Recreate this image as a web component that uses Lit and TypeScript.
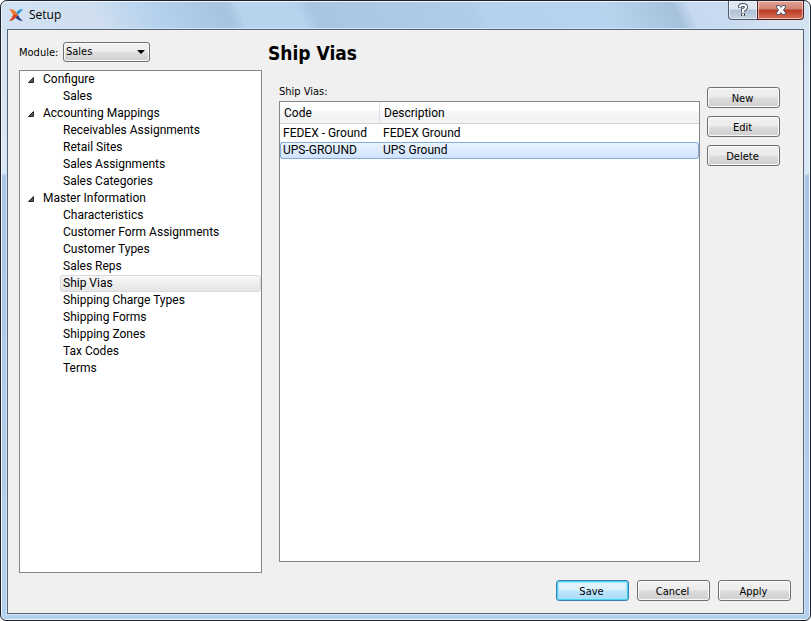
import { LitElement, html, css, svg } from "lit";
import { customElement, state } from "lit/decorators.js";
import { classMap } from "lit/directives/class-map.js";

interface Group {
  name: string;
  items: string[];
}

const GROUPS: Group[] = [
  { name: "Configure", items: ["Sales"] },
  {
    name: "Accounting Mappings",
    items: ["Receivables Assignments", "Retail Sites", "Sales Assignments", "Sales Categories"],
  },
  {
    name: "Master Information",
    items: [
      "Characteristics",
      "Customer Form Assignments",
      "Customer Types",
      "Sales Reps",
      "Ship Vias",
      "Shipping Charge Types",
      "Shipping Forms",
      "Shipping Zones",
      "Tax Codes",
      "Terms",
    ],
  },
];

const VIAS = [
  { code: "FEDEX - Ground", description: "FEDEX Ground" },
  { code: "UPS-GROUND", description: "UPS Ground" },
];

const expander = svg`<path d="M6.5 1.5V6.5H1.5Z" fill="#595959" stroke="#262626" stroke-width="1"/>`;

@customElement("app-root")
export class AppRoot extends LitElement {
  @state() private page = "Ship Vias";
  @state() private row = 1;

  static styles = css`
    :host {
      display: block;
      height: 100vh;
      font: 12px/17px Roboto, "Open Sans", sans-serif;
      color: #000;
      background: #fff;
    }
    * {
      box-sizing: border-box;
    }
    button,
    select {
      font: inherit;
      color: inherit;
      margin: 0;
      padding: 0;
    }
    .window {
      height: 100%;
      display: flex;
      flex-direction: column;
      padding: 0 6px 6px;
      border: 1px solid #1c212c;
      border-radius: 7px 7px 6px 6px;
      box-shadow: inset 0 0 0 1px #eef6fd;
      background:
        linear-gradient(65deg, #d3e2f2 0, #d0dff0 12%, #bad4ee 18%, #b0cdea 22%, #a8c3df 28%, #abc7e2 29%, #b8d3ee 30%, #b8d3ee 37%, #a9c5e1 39%, #adc8e4 47%, #b0cce8 58%, #b6d1ed 60%, #b8d3ee 75%, #a5c1dc 83%, #c6d9f0 85%, #cbdcf0 91%, #d3e3f2 94%) top / 100% 28px no-repeat,
        linear-gradient(#d3e2f2 0, #dae7f6 172px, #a8c5e4 175px, #b3d0ec 100%);
    }
    .titlebar {
      flex: none;
      height: 28px;
      display: flex;
      align-items: flex-start;
      justify-content: space-between;
      padding-left: 2px;
    }
    .caption {
      display: flex;
      align-items: center;
      gap: 6px;
      height: 27px;
      font: 12px/17px "Open Sans", "Noto Sans", sans-serif;
    }
    .logo {
      width: 14px;
      height: 12px;
      display: block;
    }
    .controls {
      display: flex;
      height: 19px;
    }
    .control {
      display: flex;
      align-items: center;
      justify-content: center;
      border: 1px solid #505c6e;
      border-top: 0;
      box-shadow: inset 0 0 0 1px #ffffff80;
    }
    .help {
      width: 29px;
      border-right: 0;
      border-radius: 0 0 0 4px;
      background: linear-gradient(#dce7f2 0 45%, #adbfd2 50%, #c5d5e5);
    }
    .close {
      width: 47px;
      border-color: #5b1f22;
      border-radius: 0 0 4px 0;
      background: linear-gradient(#e2a397 0, #d08274 45%, #b93822 50%, #d6735a);
    }
    .client {
      flex: 1;
      min-height: 0;
      display: flex;
      flex-direction: column;
      border: 1px solid #566273;
      background: #f0f0f0;
      padding: 12px 12px 12px 11px;
      gap: 7px;
      box-shadow: 0 0 0 1px #d5e6f6;
    }
    .panes {
      flex: 1;
      min-height: 0;
      display: flex;
      gap: 6px;
    }
    .side {
      flex: none;
      width: 243px;
      display: flex;
      flex-direction: column;
      gap: 8px;
    }
    .module {
      display: flex;
      align-items: center;
      justify-content: space-between;
      width: 131px;
      height: 20px;
    }
    .small {
      font: 11px/16px "DejaVu Sans Condensed", "DejaVu Sans", sans-serif;
    }
    .module label {
      padding-top: 2px;
    }
    .picker {
      position: relative;
      width: 87px;
      height: 20px;
    }
    .picker select {
      appearance: none;
      width: 100%;
      height: 100%;
      padding: 0 20px 0 2px;
      border: 1px solid #707070;
      border-radius: 3px;
      background: linear-gradient(#f2f2f2 0, #ebebeb 48%, #dddddd 52%, #cfcfcf);
      box-shadow: inset 0 0 0 1px #fafafa;
    }
    .arrow {
      position: absolute;
      right: 5px;
      top: 8px;
      width: 8px;
      height: 4px;
      pointer-events: none;
    }
    .tree {
      flex: 1;
      min-height: 0;
      overflow: hidden;
      border: 1px solid #828790;
      background: #fff;
    }
    ul {
      list-style: none;
      margin: 0;
      padding: 0;
    }
    .group,
    .leaf {
      display: flex;
      align-items: center;
      height: 17px;
      border: 1px solid transparent;
      line-height: 15px;
      background: none;
      text-align: left;
      white-space: nowrap;
    }
    .group {
      gap: 8px;
      padding-left: 6px;
    }
    .group svg {
      width: 8px;
      height: 8px;
    }
    .leaves {
      padding-left: 40px;
    }
    .leaf {
      width: 100%;
      padding-left: 2px;
      border-radius: 3px;
    }
    .leaf.current {
      border-color: #d9d9d9;
      background: linear-gradient(#f8f8f8, #e5e5e5);
    }
    .content {
      flex: 1;
      min-width: 0;
      display: flex;
      flex-direction: column;
    }
    h1 {
      margin: 0;
      font: bold 19px/22px "DejaVu Sans Condensed", "DejaVu Sans", sans-serif;
    }
    .body {
      flex: 1;
      min-height: 0;
      display: flex;
      gap: 7px;
      padding: 20px 11px 11px;
    }
    .list {
      flex: 1;
      display: flex;
      flex-direction: column;
      gap: 1px;
    }
    .frame {
      flex: 1;
      border: 1px solid #828790;
      background: #fff;
    }
    table {
      width: 100%;
      table-layout: fixed;
      border-collapse: separate;
      border-spacing: 0;
    }
    th,
    td {
      padding: 0 3px;
      text-align: left;
      font-weight: normal;
      white-space: nowrap;
    }
    th {
      height: 23px;
      padding: 0 4px;
      background: linear-gradient(#fff 0 9px, #f6f7f9 9px, #f1f2f4 21px, #d5d5d5 21px 22px, #fff 22px);
    }
    th:first-child {
      width: 100px;
      border-right: 1px solid #e0e1e4;
    }
    td {
      height: 17px;
      line-height: 15px;
      border: 0 solid transparent;
      border-width: 1px 0;
    }
    td:first-child {
      padding-left: 2px;
      border-left-width: 1px;
    }
    td:last-child {
      border-right-width: 1px;
    }
    .selected td {
      border-color: #84acdd;
      background: linear-gradient(#ebf4fe, #cfe3fc) padding-box;
    }
    .selected td:first-child {
      border-radius: 3px 0 0 3px;
    }
    .selected td:last-child {
      border-radius: 0 3px 3px 0;
    }
    .actions {
      flex: none;
      display: flex;
      flex-direction: column;
      gap: 8px;
      padding-top: 3px;
    }
    .footer {
      flex: none;
      display: flex;
      justify-content: flex-end;
      gap: 8px;
    }
    .push {
      width: 73px;
      height: 21px;
      padding: 2px 2px 0 0;
      border: 1px solid #707070;
      border-radius: 3px;
      background: linear-gradient(#f2f2f2 0, #ebebeb 48%, #dddddd 52%, #cfcfcf);
      box-shadow: inset 0 0 0 1px #fafafa;
    }
    .push.default {
      border-color: #3c7fb1;
      background: linear-gradient(#eaf6fd 0, #d9f0fc 48%, #bee6fd 52%, #a7d9f5);
      box-shadow: inset 0 0 0 1px #48d1f5, inset 0 0 1px 2px #a5e6fb;
    }
  `;

  private group(group: Group) {
    return html`<li role="treeitem" aria-expanded="true">
      <button class="group"><svg viewBox="0 0 8 8">${expander}</svg>${group.name}</button>
      <ul class="leaves" role="group">
        ${group.items.map(
          (item) => html`<li role="none">
            <button
              role="treeitem"
              class=${classMap({ leaf: true, current: item === this.page })}
              @click=${() => (this.page = item)}
            >${item}</button>
          </li>`
        )}
      </ul>
    </li>`;
  }

  render() {
    return html`<div class="window">
      <header class="titlebar">
        <div class="caption">
          <svg class="logo" viewBox="0 0 14 12" aria-hidden="true">
            <path d="M14 0Q12 3 9 6L7 4Q9 0 14 0Z" fill="#2f9bd8" />
            <path d="M9 6Q10 9 14 12Q9 12 6 8Z" fill="#2a3f86" />
            <path d="M0 0Q5 0 7 3L9 6L4 6Q3 3 0 0Z" fill="#e8762f" />
            <path d="M4 6L9 6Q5 12 0 12Q3 9 4 6Z" fill="#d4452b" />
          </svg>
          <span>Setup</span>
        </div>
        <div class="controls">
          <button class="control help" aria-label="Help">
            <svg width="12" height="14" viewBox="0 0 12 14" fill="none">
              <path d="M3 5V4Q3 2 6 2Q9 2 9 4Q9 6 6 7V9M6 10V13" stroke="#4a5260" stroke-width="4" />
              <path d="M3 4.5V4Q3 2 6 2Q9 2 9 4Q9 6 6 7V9M6 10.5V12.5" stroke="#fff" stroke-width="2" />
            </svg>
          </button>
          <button class="control close" aria-label="Close">
            <svg width="12" height="12" viewBox="0 0 12 12">
              <path d="M1.5 1.5H4.5L6 3.5L7.5 1.5H10.5V3L8.5 6L10.5 9V10.5H7.5L6 8.5L4.5 10.5H1.5V9L3.5 6L1.5 3Z" fill="#fff" stroke="#53566b" />
            </svg>
          </button>
        </div>
      </header>
      <main class="client">
        <div class="panes">
          <aside class="side">
            <div class="module">
              <label class="small" for="module">Module:</label>
              <div class="picker">
                <select id="module" class="small"><option>Sales</option></select>
                <svg class="arrow" viewBox="0 0 8 4" aria-hidden="true"><path d="M0 0H8L4 4Z" /></svg>
              </div>
            </div>
            <nav class="tree">
              <ul role="tree" aria-label="Setup pages">${GROUPS.map((g) => this.group(g))}</ul>
            </nav>
          </aside>
          <section class="content">
            <h1>Ship Vias</h1>
            <div class="body">
              <div class="list">
                <span class="small" id="vias">Ship Vias:</span>
                <div class="frame">
                  <table aria-labelledby="vias">
                    <thead>
                      <tr><th>Code</th><th>Description</th></tr>
                    </thead>
                    <tbody>
                      ${VIAS.map(
                        (via, i) => html`<tr
                          class=${classMap({ selected: i === this.row })}
                          @click=${() => (this.row = i)}
                        ><td>${via.code}</td><td>${via.description}</td></tr>`
                      )}
                    </tbody>
                  </table>
                </div>
              </div>
              <div class="actions">
                <button class="push small">New</button>
                <button class="push small">Edit</button>
                <button class="push small">Delete</button>
              </div>
            </div>
          </section>
        </div>
        <footer class="footer">
          <button class="push small default">Save</button>
          <button class="push small">Cancel</button>
          <button class="push small">Apply</button>
        </footer>
      </main>
    </div>`;
  }
}
